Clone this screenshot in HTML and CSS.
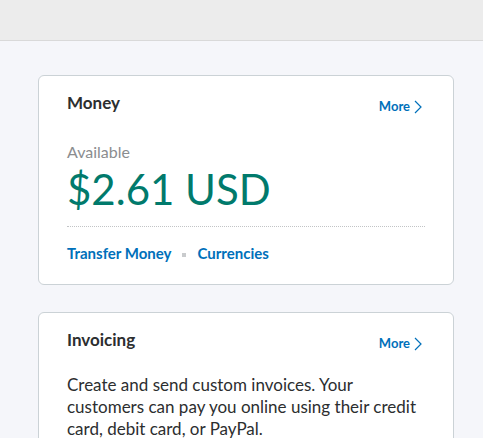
FILE: index.html
```html
<!DOCTYPE html>
<html>
<head>
<meta charset="utf-8">
<link rel="stylesheet" href="styles.css">
</head>
<body>
<div class="topbar"></div>
<main class="main">
  <section class="card">
    <div class="card-head">
      <h2 class="card-title">Money</h2>
      <a class="more" href="#">More <svg class="chev" width="8" height="14" viewBox="0 0 8 14"><path d="M1 1 L7 7 L1 13" fill="none" stroke="#0070ba" stroke-width="1.2"/></svg></a>
    </div>
    <div class="label">Available</div>
    <div class="amount">$2.61 USD</div>
    <div class="links">
      <a class="link" href="#">Transfer Money</a>
      <span class="sep"></span>
      <a class="link" href="#">Currencies</a>
    </div>
  </section>
  <section class="card">
    <div class="card-head">
      <h2 class="card-title">Invoicing</h2>
      <a class="more" href="#">More <svg class="chev" width="8" height="14" viewBox="0 0 8 14"><path d="M1 1 L7 7 L1 13" fill="none" stroke="#0070ba" stroke-width="1.2"/></svg></a>
    </div>
    <p class="desc">Create and send custom invoices. Your customers can pay you online using their credit card, debit card, or PayPal.</p>
  </section>
</main>
</body>
</html>
```

FILE: styles.css
```css
html, body {
  margin: 0;
  padding: 0;
  background: #f5f6fa;
  font-family: "Lato", "Noto Sans", sans-serif;
  color: #2c2e2f;
}
.topbar {
  height: 40px;
  background: #ececec;
  border-bottom: 1px solid #d9d9d9;
}
.main {
  padding: 34px 29px 0 38px;
  display: flex;
  flex-direction: column;
  gap: 27px;
}
.card {
  background: #fff;
  border: 1px solid #cbd2d6;
  border-radius: 6px;
  padding: 16px 28px 21px 28px;
}
.card-head {
  display: flex;
  justify-content: space-between;
  align-items: flex-start;
}
.card-title {
  margin: 0;
  font-size: 17px;
  font-weight: 700;
  line-height: 22px;
  color: #2c2e2f;
}
.more {
  display: flex;
  align-items: center;
  gap: 4px;
  margin-top: 3px;
  margin-right: 3px;
  font-size: 13px;
  font-weight: 700;
  line-height: 22px;
  color: #0070ba;
  text-decoration: none;
}
.chev {
  margin-top: 1px;
}
.label {
  margin-top: 25px;
  font-size: 16px;
  line-height: 20px;
  color: #8b8d8f;
}
.amount {
  margin-top: 2px;
  font-size: 42px;
  line-height: 50px;
  color: #017a6c;
  padding-bottom: 12px;
  border-bottom: 1px dotted #c2c4c6;
}
.links {
  display: flex;
  align-items: center;
  margin-top: 16px;
}
.link {
  font-size: 15px;
  font-weight: 700;
  line-height: 20px;
  color: #0070ba;
  text-decoration: none;
}
.sep {
  width: 4px;
  height: 4px;
  background: #c9cbcd;
  margin: 4px 11px 0 11px;
}
.desc {
  margin: 20px 0 0 0;
  font-size: 17px;
  line-height: 22px;
  color: #2c2e2f;
}
```
